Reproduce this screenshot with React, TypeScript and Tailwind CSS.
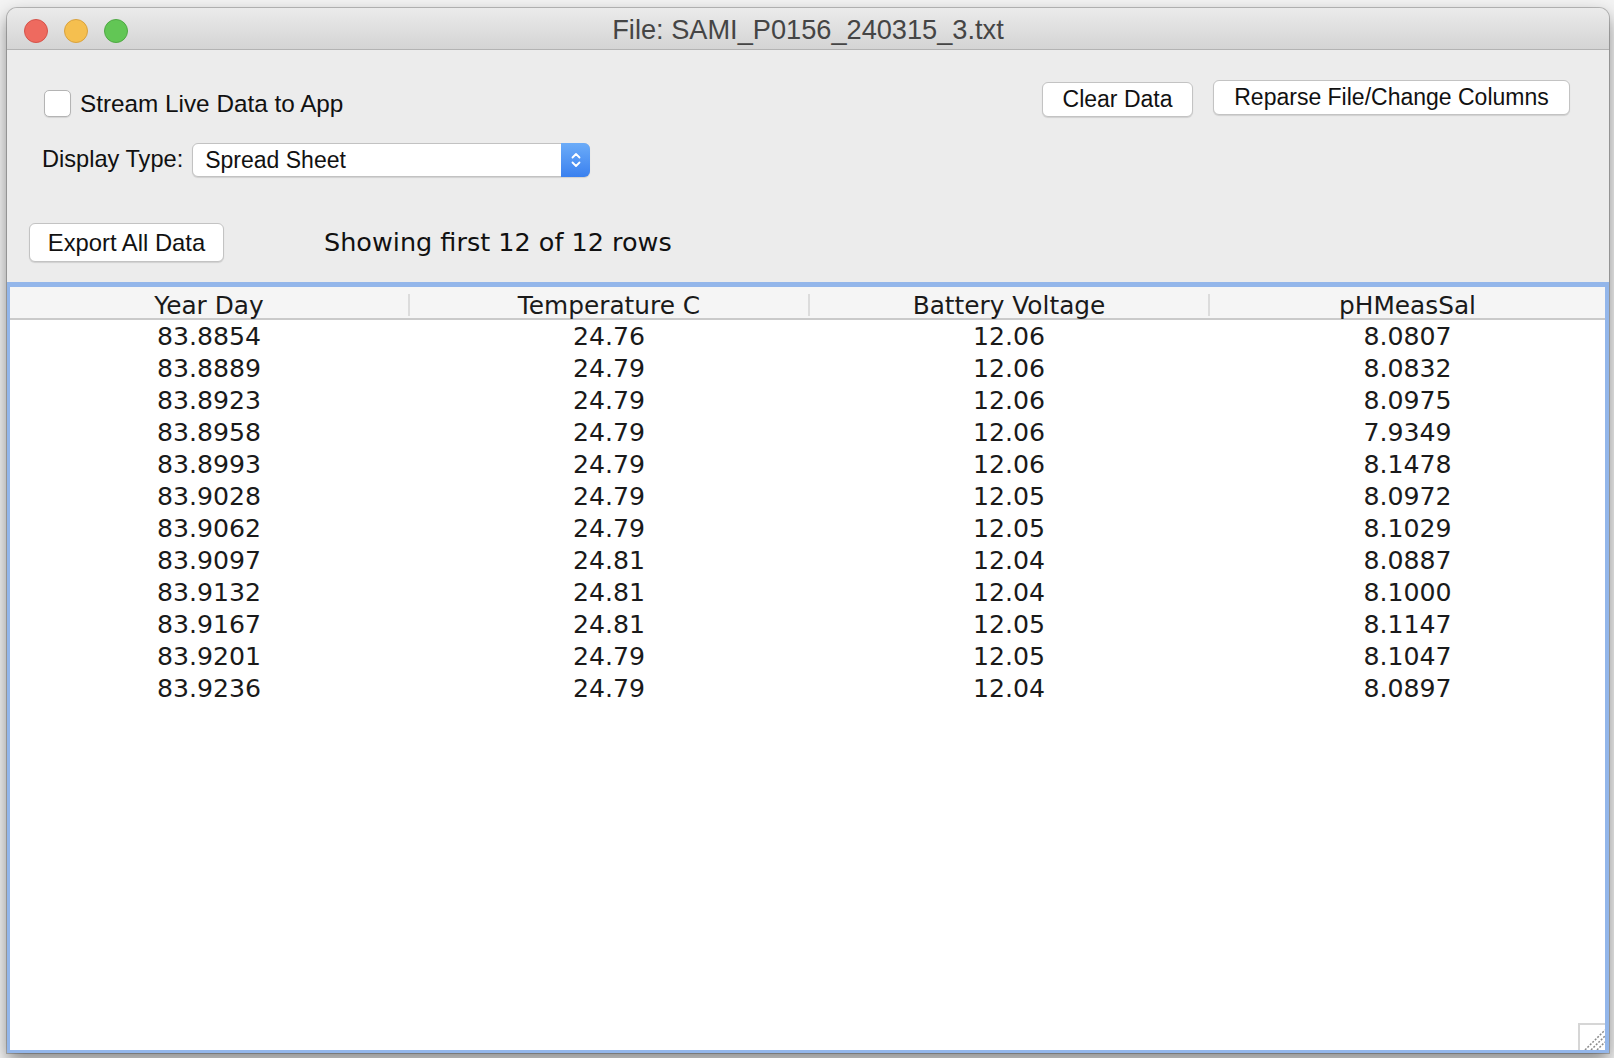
import React from "react";

const rows = [
  ["83.8854", "24.76", "12.06", "8.0807"],
  ["83.8889", "24.79", "12.06", "8.0832"],
  ["83.8923", "24.79", "12.06", "8.0975"],
  ["83.8958", "24.79", "12.06", "7.9349"],
  ["83.8993", "24.79", "12.06", "8.1478"],
  ["83.9028", "24.79", "12.05", "8.0972"],
  ["83.9062", "24.79", "12.05", "8.1029"],
  ["83.9097", "24.81", "12.04", "8.0887"],
  ["83.9132", "24.81", "12.04", "8.1000"],
  ["83.9167", "24.81", "12.05", "8.1147"],
  ["83.9201", "24.79", "12.05", "8.1047"],
  ["83.9236", "24.79", "12.04", "8.0897"],
];

const columns = ["Year Day", "Temperature C", "Battery Voltage", "pHMeasSal"];

const ui = "font-['Liberation_Sans',Arial,sans-serif]";
const table = "font-['DejaVu_Sans','Liberation_Sans',sans-serif]";
const cols = "grid grid-cols-[400px_400px_400px_1fr]";

const MacButton = ({ label, className }: { label: string; className?: string }) => (
  <button
    className={`flex items-center justify-center bg-white border border-[#c3c3c3] rounded-[6px] shadow-[0_1px_1px_rgba(0,0,0,0.12)] text-[#111] ${ui} ${className}`}
  >
    {label}
  </button>
);

export default function App() {
  return (
    <div className="w-[1614px] h-[1058px] bg-[#f3f3f3] overflow-hidden pt-[8px] pl-[7px]">
      <div className="w-[1602px] h-[1045px] flex flex-col rounded-t-[10px] bg-[#ececec] shadow-[0_0_0_1px_rgba(0,0,0,0.22),0_8px_18px_rgba(0,0,0,0.45)]">
        {/* title bar */}
        <div className="h-[42px] shrink-0 grid grid-cols-[1fr_auto_1fr] items-start rounded-t-[10px] bg-gradient-to-b from-[#ebebeb] to-[#d4d4d4] border-b border-[#b3b3b3]">
          <div className="flex gap-[16px] pl-[17px] pt-[11px]">
            <span className="w-[24px] h-[24px] rounded-full bg-[#ee6a5f] border border-[#d5534a]" />
            <span className="w-[24px] h-[24px] rounded-full bg-[#f5bf4f] border border-[#d9a23e]" />
            <span className="w-[24px] h-[24px] rounded-full bg-[#62c655] border border-[#4fa944]" />
          </div>
          <div className={`pt-[5px] text-[27.2px] leading-[34px] text-[#454545] ${ui}`}>
            File: SAMI_P0156_240315_3.txt
          </div>
          <div />
        </div>

        {/* controls */}
        <div className="h-[232px] shrink-0 bg-[#ececec] flex flex-col">
          <div className="flex justify-between pt-[30px] pr-[39px]">
            <div className="flex flex-col pl-[35px]">
              <label className="flex items-center mt-[10px] ml-[2px] h-[27px]">
                <span className="w-[27px] h-[27px] rounded-[5px] bg-white border border-[#b4b4b4] shadow-[0_1px_1px_rgba(0,0,0,0.1)]" />
                <span className={`ml-[9px] pt-[2px] text-[24.3px] text-[#111] ${ui}`}>Stream Live Data to App</span>
              </label>
              <div className="flex items-center mt-[26px] h-[34px]">
                <span className={`text-[23.6px] text-[#111] ${ui}`}>Display Type:</span>
                <div className="ml-[9px] w-[398px] h-[34px] flex bg-white border border-[#c2c2c2] rounded-[6px] shadow-[0_1px_1px_rgba(0,0,0,0.12)]">
                  <span className={`flex-1 flex items-center pl-[12px] text-[23px] text-[#111] ${ui}`}>Spread Sheet</span>
                  <span className="w-[29px] -my-px -mr-px rounded-r-[6px] bg-gradient-to-b from-[#6cacf8] to-[#3a80ef] flex items-center justify-center">
                    <svg width="12" height="20" viewBox="0 0 12 20" fill="none" stroke="white" strokeWidth="1.8" strokeLinecap="round" strokeLinejoin="round">
                      <path d="M2.5 7.5 L6 4 L9.5 7.5" />
                      <path d="M2.5 12.5 L6 16 L9.5 12.5" />
                    </svg>
                  </span>
                </div>
              </div>
            </div>
            <div className="flex items-start gap-[20px]">
              <MacButton label="Clear Data" className="mt-[2px] w-[151px] h-[35px] text-[23px]" />
              <MacButton label="Reparse File/Change Columns" className="w-[357px] h-[35px] text-[23px]" />
            </div>
          </div>
          <div className="flex items-center pl-[22px] mt-[46px]">
            <MacButton label="Export All Data" className="w-[195px] h-[39px] text-[23.8px]" />
            <span className={`ml-[100px] text-[25.5px] text-[#111] ${table}`}>Showing first 12 of 12 rows</span>
          </div>
        </div>

        {/* table */}
        <div className="flex-1 relative bg-white border-[#93b6ea] border-l-[3px] border-r-[4px] border-t-[5px] border-b-[3px] overflow-hidden">
          <div className={`${cols} h-[33px] bg-[#f5f5f5] border-b-2 border-[#cacaca]`}>
            {columns.map((c, i) => (
              <div key={c} className="flex items-center">
                <span className={`flex-1 text-center pt-[4px] text-[24.8px] leading-[29px] text-[#1a1a1a] ${table}`}>{c}</span>
                {i < 3 && <span className="w-[2px] h-[22px] mt-[2px] bg-[#dcdcdc]" />}
              </div>
            ))}
          </div>
          <div className="flex flex-col pt-[1px]">
            {rows.map((r, i) => (
              <div key={i} className={`${cols} h-[32px]`}>
                {r.map((v, j) => (
                  <span key={j} className={`text-center text-[25.2px] leading-[32px] text-[#1a1a1a] ${table} ${j < 3 ? "pr-[2px]" : ""}`}>
                    {v}
                  </span>
                ))}
              </div>
            ))}
          </div>
          <div className="absolute right-0 bottom-0 w-[27px] h-[27px] bg-white border-t-2 border-l-2 border-[#d6d6d6]">
            <svg width="25" height="25" viewBox="0 0 25 25" stroke="#8a8a8a" strokeWidth="1.5" strokeDasharray="2 1.5">
              <path d="M5 25 L25 5" />
              <path d="M11 25 L25 11" />
              <path d="M17 25 L25 17" />
            </svg>
          </div>
        </div>
      </div>
    </div>
  );
}
